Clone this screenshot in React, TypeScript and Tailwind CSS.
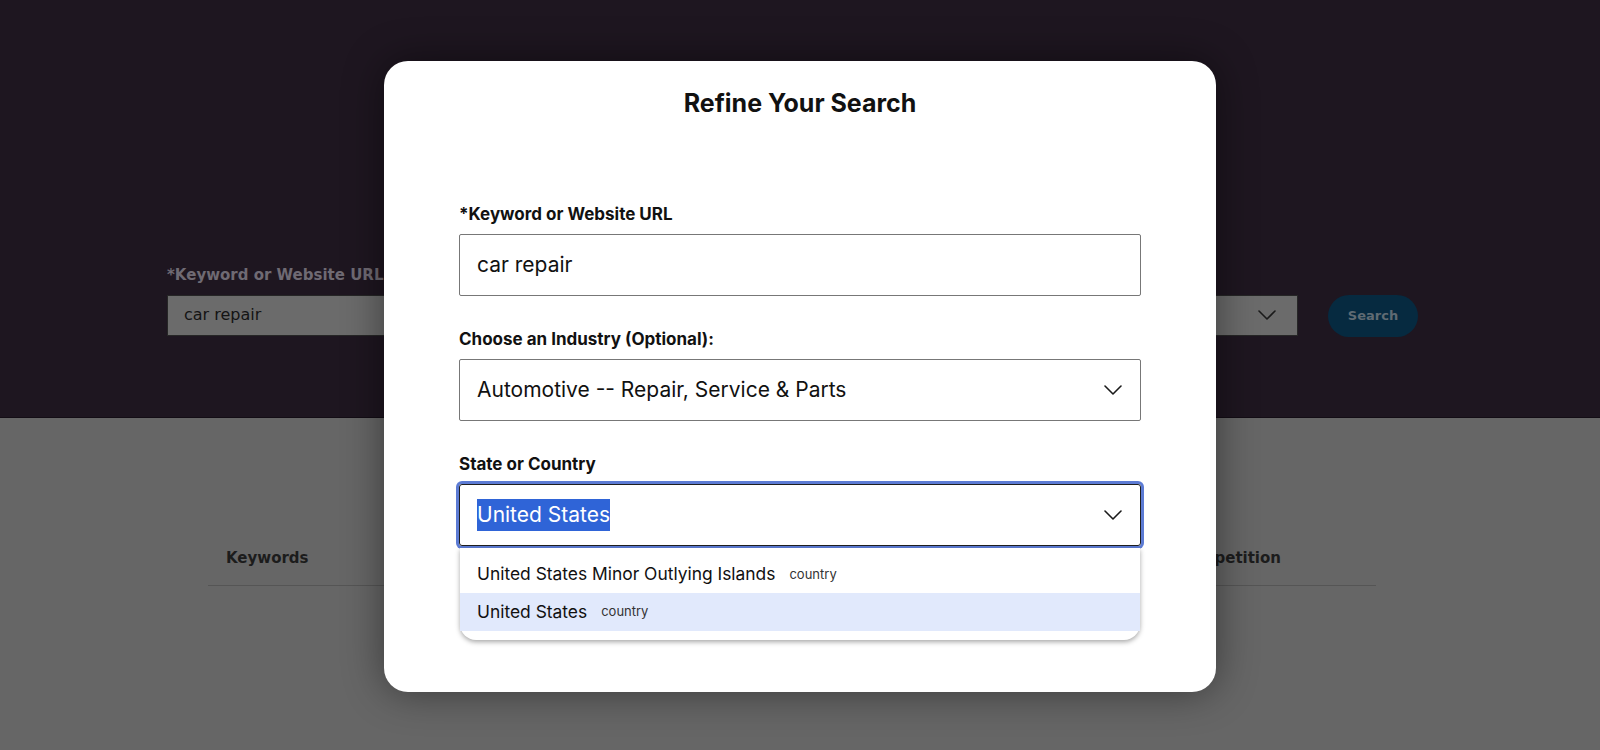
import React from "react";

const sans = { fontFamily: "Inter, 'Noto Sans', sans-serif" };
const dv = { fontFamily: "'DejaVu Sans', Verdana, sans-serif" };

function Chevron({ className = "" }: { className?: string }) {
  return (
    <svg width="18" height="10" viewBox="0 0 18 10" fill="none" className={className}>
      <path d="M1 1l8 8 8-8" stroke="#1a1a1a" strokeWidth="1.6" strokeLinecap="round" strokeLinejoin="round" />
    </svg>
  );
}

function Field({ label, children, first }: { label: string; children: React.ReactNode; first?: boolean }) {
  return (
    <div className={first ? "mt-[87px]" : "mt-[33px]"}>
      <div className="h-5 text-[17px] font-bold leading-5 text-[#111]">{label}</div>
      <div className="mt-[10px]">{children}</div>
    </div>
  );
}

export default function App() {
  return (
    <div className="relative h-[750px] w-[1600px] overflow-hidden bg-[#666666]" style={dv}>
      {/* page behind the modal (already dimmed) */}
      <section className="h-[418px] border-b border-[#130d15] bg-[#1e1620] pl-[167px] pt-[265px]">
        <div className="text-[15px] font-bold leading-5 text-[#6f6a73]">*Keyword or Website URL</div>
        <div className="mt-[8px] flex items-center">
          <div className="flex h-[41px] w-[420px] items-center border border-[#262626] bg-[#6b6b6b] pl-[16px] text-[16px] text-[#141414]">
            car repair
          </div>
          <div className="ml-[16px] flex h-[41px] w-[695px] items-center justify-end border border-[#262626] bg-[#6b6b6b] pr-[21px]">
            <Chevron />
          </div>
          <button className="ml-[30px] mt-[2px] h-[42px] w-[90px] rounded-full bg-[#062a40] text-[13px] font-bold text-[#5f6b73]">
            Search
          </button>
        </div>
      </section>
      <section className="ml-[208px] mr-[224px] pt-[130px]">
        <div className="flex items-center justify-between border-b border-[#555555] pb-[17px] pl-[18px] pr-[95px] text-[15px] font-bold leading-5 text-[#1c1c1c]">
          <span>Keywords</span>
          <span>Competition</span>
        </div>
      </section>

      {/* modal */}
      <div className="absolute inset-0 flex justify-center pt-[61px]">
        <div
          className="h-[631px] w-[832px] rounded-[24px] bg-white px-[75px] pt-[28px] shadow-[0_0_40px_rgba(0,0,0,0.45)]"
          style={sans}
        >
          <h2 className="h-[28px] text-center text-[25px] font-bold leading-[28px] text-[#111]">
            Refine Your Search
          </h2>

          <Field label="*Keyword or Website URL" first>
            <div className="flex h-[62px] items-center rounded-[2px] border border-[#777] pl-[17px] text-[21px] text-[#111]">
              car repair
            </div>
          </Field>

          <Field label="Choose an Industry (Optional):">
            <div className="flex h-[62px] items-center justify-between rounded-[2px] border border-[#777] pl-[17px] pr-[18px] text-[21px] text-[#111]">
              <span>Automotive -- Repair, Service &amp; Parts</span>
              <Chevron />
            </div>
          </Field>

          <Field label="State or Country">
            <div className="relative">
              <div className="flex h-[62px] items-center justify-between rounded-[3px] border border-[#1f1f1f] pl-[17px] pr-[18px] text-[21px] text-[#111] ring-[3px] ring-[#5c7bd4]">
                <span className="bg-[#2f64d7] text-white">United States</span>
                <Chevron />
              </div>
              <div className="absolute left-[1px] right-[1px] top-[64px] rounded-b-[16px] bg-white pb-[9px] pt-[8px] shadow-[0_2px_5px_rgba(0,0,0,0.35)]">
                <div className="flex h-[37px] items-center pl-[17px] text-[17.4px] text-[#111]">
                  United States Minor Outlying Islands
                  <span className="ml-[14px] text-[13px] text-[#333]">country</span>
                </div>
                <div className="flex h-[38px] items-center bg-[#e1e9fc] pl-[17px] text-[17.4px] text-[#111]">
                  United States
                  <span className="ml-[14px] text-[13px] text-[#333]">country</span>
                </div>
              </div>
            </div>
          </Field>
        </div>
      </div>
    </div>
  );
}
